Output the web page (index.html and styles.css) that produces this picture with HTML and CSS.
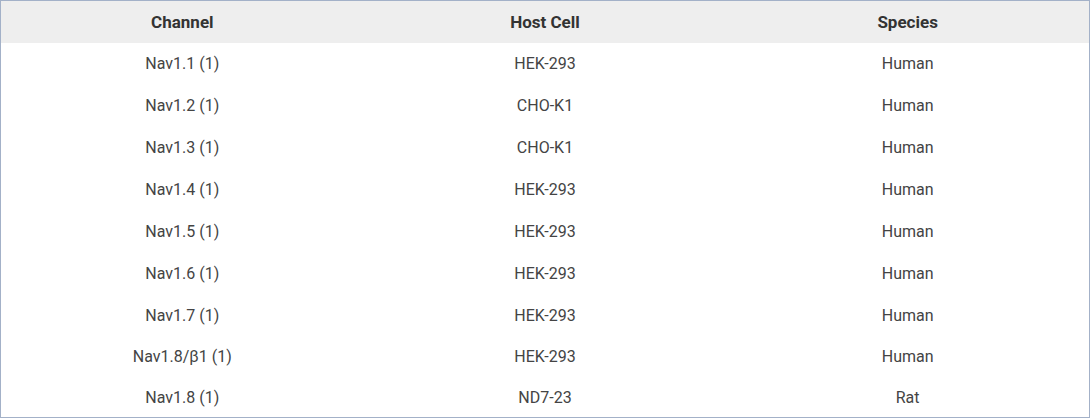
FILE: index.html
```html
<!DOCTYPE html>
<html>
<head>
<meta charset="utf-8">
<link rel="stylesheet" href="styles.css">
</head>
<body>
<div class="frame">
  <table class="grid">
    <thead>
      <tr><th>Channel</th><th>Host Cell</th><th>Species</th></tr>
    </thead>
    <tbody>
      <tr><td>Nav1.1 (1)</td><td>HEK-293</td><td>Human</td></tr>
      <tr><td>Nav1.2 (1)</td><td>CHO-K1</td><td>Human</td></tr>
      <tr><td>Nav1.3 (1)</td><td>CHO-K1</td><td>Human</td></tr>
      <tr><td>Nav1.4 (1)</td><td>HEK-293</td><td>Human</td></tr>
      <tr><td>Nav1.5 (1)</td><td>HEK-293</td><td>Human</td></tr>
      <tr><td>Nav1.6 (1)</td><td>HEK-293</td><td>Human</td></tr>
      <tr><td>Nav1.7 (1)</td><td>HEK-293</td><td>Human</td></tr>
      <tr class="r41"><td>Nav1.8/β1 (1)</td><td>HEK-293</td><td>Human</td></tr>
      <tr class="r40"><td>Nav1.8 (1)</td><td>ND7-23</td><td>Rat</td></tr>
    </tbody>
  </table>
</div>
</body>
</html>
```
FILE: styles.css
```css
html, body {
  margin: 0;
  padding: 0;
  background: #ffffff;
}
.frame {
  width: 1090px;
  height: 418px;
  box-sizing: border-box;
  border: 1px solid #a3b1c8;
  overflow: hidden;
}
.grid {
  width: 100%;
  border-collapse: collapse;
  table-layout: fixed;
  font-family: Roboto, "Liberation Sans", sans-serif;
  font-size: 16px;
}
.grid th {
  height: 42px;
  padding: 0 0 1px 0;
  box-sizing: border-box;
  background: #eeeeee;
  color: #333333;
  font-weight: 700;
  font-size: 17px;
  text-align: center;
  vertical-align: middle;
}
.grid td {
  height: 42px;
  padding: 0 0 2px 0;
  box-sizing: border-box;
  color: #444444;
  text-align: center;
  vertical-align: middle;
}
.grid tr.r41 td { height: 41px; }
.grid tr.r40 td { height: 40px; }
```
